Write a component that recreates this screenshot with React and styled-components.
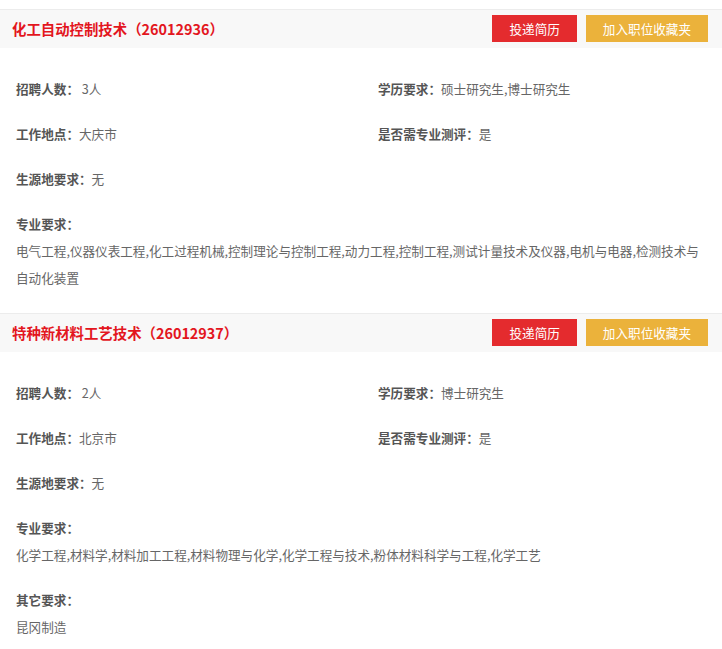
import React from 'react';
import styled, { createGlobalStyle } from 'styled-components';

const GlobalStyle = createGlobalStyle`
  html, body {
    margin: 0;
    padding: 0;
    background: #fff;
  }
  body {
    font-family: "Noto Sans CJK SC", "Noto Sans", sans-serif;
  }
`;

const Page = styled.div`
  width: 722px;
  padding-top: 9px;
`;

const JobCard = styled.div`
  margin-bottom: 13px;
`;

const CardHeader = styled.div`
  display: flex;
  align-items: center;
  justify-content: space-between;
  height: 38px;
  padding: 0 14px 0 12px;
  background: #f8f8f8;
  border-top: 1px solid #ececec;
`;

const JobTitle = styled.h3`
  margin: 0;
  font-size: 14.4px;
  font-weight: bold;
  color: #e3161e;
  line-height: 20px;
`;

const Actions = styled.div`
  display: flex;
  gap: 9px;
  margin-top: -1px;
`;

const ActionButton = styled.button`
  height: 27px;
  padding: 0 17px;
  border: none;
  background: ${(props) => (props.$variant === 'gold' ? '#ebb23b' : '#e42b2e')};
  color: #fff;
  font-family: inherit;
  font-size: 12.6px;
  cursor: pointer;
`;

const InfoGrid = styled.div`
  display: grid;
  grid-template-columns: 362px 1fr;
  padding: 18px 0 0 16px;
`;

const InfoItem = styled.div`
  height: 45px;
  line-height: 45px;
  font-size: 12.6px;
  color: #666;
`;

const Label = styled.span`
  font-weight: bold;
  color: #555;
`;

const TextBlock = styled.div`
  padding: 9px 16px;
  font-size: 12.6px;
  line-height: 27px;
  color: #666;
`;

const BlockLabel = styled.div`
  font-weight: bold;
  color: #555;
`;

const jobs = [
  {
    title: '化工自动控制技术（26012936）',
    count: '3人',
    edu: '硕士研究生,博士研究生',
    place: '大庆市',
    test: '是',
    origin: '无',
    major:
      '电气工程,仪器仪表工程,化工过程机械,控制理论与控制工程,动力工程,控制工程,测试计量技术及仪器,电机与电器,检测技术与自动化装置',
  },
  {
    title: '特种新材料工艺技术（26012937）',
    count: '2人',
    edu: '博士研究生',
    place: '北京市',
    test: '是',
    origin: '无',
    major:
      '化学工程,材料学,材料加工工程,材料物理与化学,化学工程与技术,粉体材料科学与工程,化学工艺',
    other: '昆冈制造',
  },
];

const JobItem = ({ job }) => (
  <JobCard>
    <CardHeader>
      <JobTitle>{job.title}</JobTitle>
      <Actions>
        <ActionButton>投递简历</ActionButton>
        <ActionButton $variant="gold">加入职位收藏夹</ActionButton>
      </Actions>
    </CardHeader>
    <InfoGrid>
      <InfoItem>
        <Label>招聘人数：</Label> {job.count}
      </InfoItem>
      <InfoItem>
        <Label>学历要求：</Label>
        {job.edu}
      </InfoItem>
      <InfoItem>
        <Label>工作地点：</Label>
        {job.place}
      </InfoItem>
      <InfoItem>
        <Label>是否需专业测评：</Label>
        {job.test}
      </InfoItem>
      <InfoItem>
        <Label>生源地要求：</Label>
        {job.origin}
      </InfoItem>
    </InfoGrid>
    <TextBlock>
      <BlockLabel>专业要求：</BlockLabel>
      {job.major}
    </TextBlock>
    {job.other && (
      <TextBlock>
        <BlockLabel>其它要求：</BlockLabel>
        {job.other}
      </TextBlock>
    )}
  </JobCard>
);

export default function App() {
  return (
    <Page>
      <GlobalStyle />
      {jobs.map((job) => (
        <JobItem key={job.title} job={job} />
      ))}
    </Page>
  );
}
